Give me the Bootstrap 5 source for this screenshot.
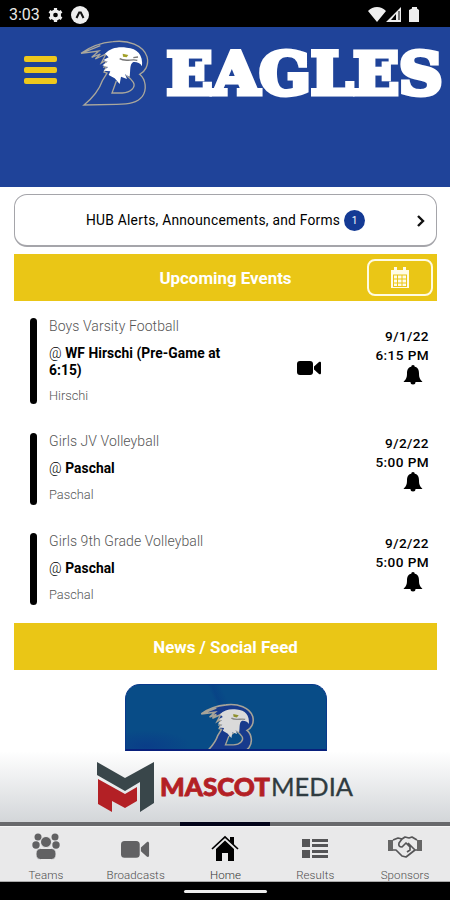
<!DOCTYPE html>
<html lang="en">
<head>
<meta charset="utf-8">
<meta name="viewport" content="width=device-width, initial-scale=1">
<title>Eagles</title>
<link href="https://cdn.jsdelivr.net/npm/bootstrap@5.3.0/dist/css/bootstrap.min.css" rel="stylesheet">
<style>
body{font-family:Roboto,sans-serif;width:450px;height:900px;overflow:hidden;background:#fff;color:#000}
svg{display:block;flex:none}
.status{height:27px;padding:2px 30px 0 9px;background:#000;color:#e8e8e8;font-size:16px}
.hero{height:160px;background:#1f4399;padding:8px 0 0 24px}
.burger{width:33px;gap:5px;padding-top:21px}
.burger span{height:6px;border-radius:2px;background:#eec81c}
.alerts{height:53px;margin:7px 13px 7px 14px;border:1px solid #a5a5aa;border-bottom-width:2px;border-radius:13px;font-size:13.8px;letter-spacing:.24px;padding:1px 11px 0 71px}
.count{width:21px;height:21px;background:#143a94;font-size:10px;letter-spacing:0;margin-left:4px}
.banner{height:47px;margin:0 13px 0 14px;padding-top:2px;background:#eac616;color:#fff;font-size:16.9px;font-weight:700;position:relative}
.cal{position:absolute;right:4px;top:5px;width:66px;height:37px;border:2px solid #fffbe2;border-radius:8px}
.events{padding-top:17px}
.event{margin:0 22px 29px 30px}
.event+.event{margin-bottom:28px}
.event:last-child{margin-bottom:18px}
.bar{width:7px;border-radius:4px;background:#000}
.info{width:194px;margin-left:12px;height:72px;line-height:17px}
.info.tall{height:86px}
.team{font-size:14px;font-weight:300;color:#555;letter-spacing:.08px}
.opp{font-size:13.8px;font-weight:700;line-height:17px;margin-top:10px;letter-spacing:.06px}
.opp i{font-style:normal;font-weight:300}
.place{font-size:12.8px;font-weight:300;color:#555;margin-top:9px}
.tall .place{margin-top:8px}
.when{font-size:13.6px;font-weight:500;line-height:19px;letter-spacing:.4px;margin-top:1px;margin-right:-1px}
.when.first{margin-top:9px}
.when svg{margin-right:6px}
.cam{margin:43px 0 0 54px}
.post{width:202px;height:67px;margin:14px 0 0 125px;border-radius:15px 15px 0 0;background:radial-gradient(ellipse at 10% 95%,#0b348999 0,#07468800 18%),linear-gradient(66deg,#08488a00 48%,#07388566 50%,#08488a00 54%),#084c87;border:1px solid #08398b;border-bottom:2px solid #08207c}
.post .letter{fill:#173a8c;stroke-width:6}
.post .head{fill:#dadada}
.ad{height:71px;background:linear-gradient(#fff,#d3d6d9)}
.rail{height:4px;background:#68696c}
.rail span{width:90px;height:4px;background:#020419}
.tabs{height:56px;padding-left:1px;background:#e9e9ea;border-top:1px solid #f6f6f6;border-bottom:1px solid #aaa}
.tabs a{width:90px;padding-top:6px;font-size:11.5px;line-height:14px;font-weight:300;color:#4e4e4e;text-decoration:none;letter-spacing:.1px}
.tabs svg{height:30px;margin-bottom:5px}
.tabs a.now{color:#333}
.home-bar{height:18px;background:#000;padding-top:8px}
.home-bar span{width:83px;height:3px;border-radius:2px;background:#eee}
</style>
<script src="https://cdn.jsdelivr.net/npm/bootstrap@5.3.0/dist/js/bootstrap.bundle.min.js"></script>
</head>
<body>
<svg width="0" height="0" class="position-absolute">
<defs>
<path id="bell" d="M10 0c1.200 0 1.700.8 1.700 1.800C15 2.500 16 5 16 8.500 16 13 17.300 14.500 19.500 17H.5C2.700 14.500 4 13 4 8.500 4 5 5 2.500 8.300 1.800 8.300.8 8.800 0 10 0ZM7.500 17h5a2.500 2.500 0 0 1-5 0Z"/>
<g id="cam"><rect width="16" height="14" rx="3"/><path d="M17 5.500 22 1c1-.7 2 0 2 1v10c0 1-1 1.700-2 1l-5-4.500Z"/></g>
</defs>
</svg>

<header>
<div class="status d-flex align-items-center">
<span>3:03</span>
<svg class="ms-2" width="15" height="16" viewBox="-8 -8 16 16"><circle r="4.200" fill="none" stroke="#eee" stroke-width="3.400"/><path d="M0-7.500V-4M0 4v3.500M-6.500-3.750-3.500-2M3.500 2l3 1.750M-6.500 3.750-3.500 2M3.500-2l3-1.750" stroke="#eee" stroke-width="3.400"/></svg>
<svg class="ms-2" width="18" height="18" viewBox="0 0 18 18"><circle cx="9" cy="9" r="9" fill="#eee"/><path d="M5.500 12 8.200 6.500h1.600l2.700 5.500" fill="none" stroke="#111" stroke-width="2"/></svg>
<svg class="ms-auto" width="52" height="17" viewBox="0 0 52 17" fill="#eee"><path d="M0 5C5-.3 13-.3 18 5L9 16ZM33 1v15H18Z"/><path d="M28 8v6h-5Z" fill="#000"/><path d="M31 5v9" stroke="#000" stroke-width="1"/><path d="M41 4l3-1.500V1h5v1.500L51 4v12H41Z"/></svg>
</div>
<div class="hero d-flex align-items-start">
<div class="burger d-flex flex-column"><span></span><span></span><span></span></div>
<svg class="ms-3" width="90" height="75" viewBox="9 0 270 225">
<path d="M33 55C65 32 96 23 129 20C174 14 220 31 231 65C238 91 224 111 209 118C228 134 231 164 217 184C202 203 178 207 140 208L42 210C66 190 86 169 97 137L111 114L102 111L110 93L102 96L110 75L94 84L108 57L76 72L91 57L65 67L87 48L33 55L91 32" fill="none" stroke="#aaa79c" stroke-width="4"/>
<path d="M139 138L126 174H157C183 173 198 156 190 142L181 131L168 120" fill="none" stroke="#aaa79c" stroke-width="4"/>
<path d="M105 56C121 39 145 34 170 38C202 40 220 60 216 94C211 83 199 80 190 81C178 88 182 105 179 125L165 118L171 132L153 125L149 147L134 130L116 120L121 109L101 107L114 96L97 91L113 80L100 75L116 67Z" fill="#fff"/>
<path d="M149 71C165 82 186 71 202 76M190 68L204 66" fill="none" stroke="#777" stroke-width="4"/>
<path d="M158 56L175 60L170 67L159 65Z" fill="#a3a129"/>
</svg>
<svg width="287" height="80" viewBox="163 35 287 80"><text x="166.500" y="94" font-family="DejaVu Serif,serif" font-weight="700" font-size="58.500" textLength="276" lengthAdjust="spacingAndGlyphs" fill="#fff" stroke="#fff" stroke-width="5">EAGLES</text></svg>
</div>
</header>

<main>
<div class="alerts d-flex align-items-center">
<span>HUB Alerts, Announcements, and Forms</span>
<span class="count rounded-circle text-white d-flex align-items-center justify-content-center">1</span>
<svg class="ms-auto" width="8" height="12" viewBox="0 0 8 12"><path d="M1 1l5 5-5 5" fill="none" stroke="#111" stroke-width="2.400"/></svg>
</div>
<div class="banner d-flex align-items-center justify-content-center"><span>Upcoming Events</span>
<span class="cal d-flex align-items-center justify-content-center"><svg width="20" height="21" viewBox="0 0 20 21"><path d="M1 3h18v18H1ZM4 0h3v4H4ZM13 0h3v4h-3Z" fill="#fffce8"/><path d="M3 8h14M3 12h14M3 16h14M3 19.500h14M3.500 8v11M7.500 8v11M12 8v11M16.500 8v11" stroke="#eac616"/></svg></span></div>

<section class="events">
<div class="event d-flex">
<div class="bar"></div>
<div class="info tall"><div class="team">Boys Varsity Football</div><div class="opp"><i>@</i> WF Hirschi (Pre-Game at 6:15)</div><div class="place">Hirschi</div></div>
<svg class="cam" width="24" height="14"><use href="#cam"/></svg>
<div class="when first ms-auto d-flex flex-column align-items-end"><span>9/1/22</span><span>6:15 PM</span><svg width="20" height="21"><use href="#bell"/></svg></div>
</div>
<div class="event d-flex">
<div class="bar"></div>
<div class="info"><div class="team">Girls JV Volleyball</div><div class="opp"><i>@</i> Paschal</div><div class="place">Paschal</div></div>
<div class="when ms-auto d-flex flex-column align-items-end"><span>9/2/22</span><span>5:00 PM</span><svg width="20" height="21"><use href="#bell"/></svg></div>
</div>
<div class="event d-flex">
<div class="bar"></div>
<div class="info"><div class="team">Girls 9th Grade Volleyball</div><div class="opp"><i>@</i> Paschal</div><div class="place">Paschal</div></div>
<div class="when ms-auto d-flex flex-column align-items-end"><span>9/2/22</span><span>5:00 PM</span><svg width="20" height="21"><use href="#bell"/></svg></div>
</div>
</section>

<div class="banner d-flex align-items-center justify-content-center">News / Social Feed</div>
<div class="post overflow-hidden d-flex justify-content-center"><svg width="68" height="66" viewBox="-2 -44 204 198">
<g transform="scale(.78)">
<path class="letter" d="M33 55C65 32 96 23 129 20C174 14 220 31 231 65C238 91 224 111 209 118C228 134 231 164 217 184C202 203 178 207 140 208L42 210C66 190 86 169 97 137L111 114L102 111L110 93L102 96L110 75L94 84L108 57L76 72L91 57L65 67L87 48L33 55L91 32" stroke="#a6a398"/>
<path d="M139 141L126 174H157C183 173 198 156 190 142L181 131L168 120Z" fill="#084c87" stroke="#a6a398" stroke-width="5"/>
<path class="head" d="M105 56C121 39 145 34 170 38C202 40 220 60 216 94C211 83 199 80 190 81C178 88 182 105 179 125L165 118L171 132L153 125L149 147L134 130L116 120L121 109L101 107L114 96L97 91L113 80L100 75L116 67Z"/>
<path d="M149 71C165 82 186 71 202 76" fill="none" stroke="#888" stroke-width="5"/>
<path d="M156 55L177 60L170 69L157 66Z" fill="#8f9130"/>
</g></svg></div>
</main>

<footer>
<div class="ad">
<svg width="450" height="71" viewBox="0 0 450 71">
<path d="M97 11 125 27 154 11V52L140 61V31L125 40 97 24Z" fill="#39464a"/>
<path d="M98 28 125 43 137 36V50L125 57 112 50V61L98 53Z" fill="#b32025"/>
<g font-family="Lato,sans-serif" font-size="24.500"><text x="160" y="45" font-weight="900" fill="#b32025" stroke="#b32025" stroke-width=".8" textLength="110" lengthAdjust="spacingAndGlyphs">MASCOT</text><text x="271" y="45" fill="#2f3b40" stroke="#2f3b40" stroke-width=".3" textLength="82" lengthAdjust="spacingAndGlyphs">MEDIA</text></g>
</svg>
</div>
<div class="rail d-flex justify-content-center"><span></span></div>
<nav class="tabs d-flex">
<a class="d-flex flex-column align-items-center" href="#"><svg width="30" viewBox="0 0 30 30" fill="#616163"><circle cx="7" cy="4" r="3.500"/><circle cx="24" cy="4" r="3.500"/><circle cx="5" cy="12" r="3.700"/><circle cx="25" cy="12" r="3.700"/><circle cx="15" cy="9" r="5.500" stroke="#e9e9ea"/><rect x="5" y="15.500" width="20" height="11" rx="4.500" stroke="#e9e9ea"/></svg>Teams</a>
<a class="d-flex flex-column align-items-center" href="#"><svg width="30" viewBox="0 0 30 30" fill="#616163"><use href="#cam" transform="translate(0 8) scale(1.170 1.200)"/></svg>Broadcasts</a>
<a class="now d-flex flex-column align-items-center" href="#"><svg width="30" viewBox="0 0 30 30"><path d="M15 7.500 24 16V28H18V20H12V28H6V16ZM20 4h4v8l-4-4Z"/><path d="M2 16 15 4 28 16" fill="none" stroke="#000" stroke-width="1.700"/></svg>Home</a>
<a class="d-flex flex-column align-items-center" href="#"><svg width="26" viewBox="0 0 26 30" fill="#555557"><path d="M0 6h8v8H0ZM0 17h8v8H0ZM10 6h16v3H10ZM10 11h16v3H10ZM10 17h16v3H10ZM10 22h16v3H10Z"/></svg>Results</a>
<a class="d-flex flex-column align-items-center" href="#"><svg width="34" viewBox="0 0 34 30"><path d="M5 7 10 5 14 6 17 4 21 5 24 4 29 7M5 17H8L14 23 18 24 27 17H29M14 6 11 10Q10 14 14 14L18 10 22 14V17L19 19M20 10 27 17" fill="none" stroke="#555557" stroke-width="1.700" stroke-linejoin="round"/><path d="M0 7h5v11H0ZM29 7h5v11h-5Z" fill="#666"/></svg>Sponsors</a>
</nav>
<div class="home-bar d-flex justify-content-center"><span></span></div>
</footer>
</body>
</html>
